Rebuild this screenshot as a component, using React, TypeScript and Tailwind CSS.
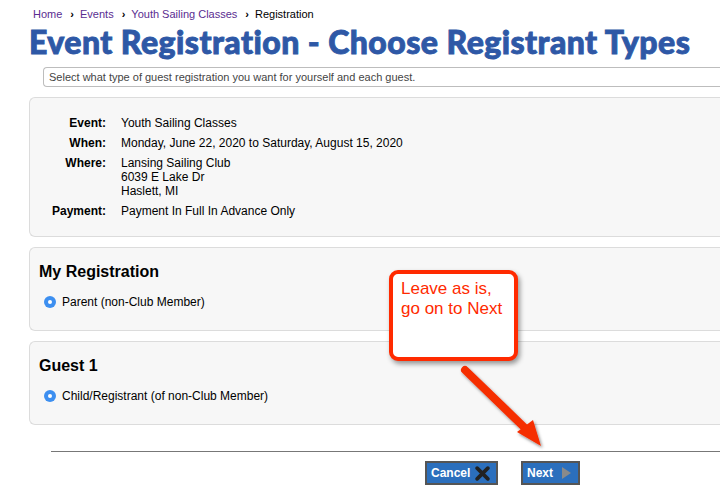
import React from 'react';

const details: [string, string[]][] = [
  ['Event:', ['Youth Sailing Classes']],
  ['When:', ['Monday, June 22, 2020 to Saturday, August 15, 2020']],
  ['Where:', ['Lansing Sailing Club', '6039 E Lake Dr', 'Haslett, MI']],
  ['Payment:', ['Payment In Full In Advance Only']],
];

function Radio() {
  return (
    <span className="flex h-[12px] w-[12px] shrink-0 items-center justify-center rounded-full bg-[#3d8ff0]">
      <span className="h-[4px] w-[4px] rounded-full bg-white" />
    </span>
  );
}

function GuestPanel({ title, option }: { title: string; option: string }) {
  return (
    <section className="mt-[10px] rounded-l-[6px] border border-r-0 border-[#dcdcdc] bg-[#f7f7f7] pb-[20px] pl-[9px] pt-[14px]">
      <h2 className="text-[16px] font-bold leading-[20px] text-black">{title}</h2>
      <label className="mt-[12px] flex items-center gap-[6px] pl-[5px] text-[12px] leading-[16px] text-black">
        <Radio />
        {option}
      </label>
    </section>
  );
}

function Chevron() {
  return <span className="ml-[8px] mr-[6px] text-[11px] font-bold text-black">›</span>;
}

export default function App() {
  return (
    <div className="relative h-[492px] w-[720px] overflow-hidden bg-white font-['Liberation_Sans',Arial,sans-serif]">
      <nav className="flex items-center pl-[33px] pt-[7px] text-[11px] leading-[14px]">
        <a className="text-[#5a2d91]">Home</a>
        <Chevron />
        <a className="text-[#5a2d91]">Events</a>
        <Chevron />
        <a className="text-[#5a2d91]">Youth Sailing Classes</a>
        <Chevron />
        <span className="text-black">Registration</span>
      </nav>

      <div className="pl-[29px]">
        <h1 className="mt-[2px] whitespace-nowrap font-['Lato',sans-serif] text-[32px] font-black leading-[38px] tracking-[0.45px] text-[#2e58a6] [-webkit-text-stroke:0.9px_#2e58a6]">
          Event Registration - Choose Registrant Types
        </h1>

        <div className="ml-[14px] mt-[6px] rounded-l-[4px] border border-r-0 border-[#bdbdbd] pl-[5px] text-[11px] leading-[18px] text-[#444]">
          Select what type of guest registration you want for yourself and each guest.
        </div>

        <section className="mt-[10px] rounded-l-[6px] border border-r-0 border-[#dcdcdc] bg-[#f7f7f7] pb-[15px] pt-[15px]">
          <div className="grid grid-cols-[76px_1fr] gap-x-[15px] text-[12px] leading-[14px] text-black">
            {details.map(([label, lines]) => (
              <React.Fragment key={label}>
                <div className="py-[3px] text-right font-bold">{label}</div>
                <div className="py-[3px]">
                  {lines.map((l) => (
                    <div key={l}>{l}</div>
                  ))}
                </div>
              </React.Fragment>
            ))}
          </div>
        </section>

        <GuestPanel title="My Registration" option="Parent (non-Club Member)" />
        <GuestPanel title="Guest 1" option="Child/Registrant (of non-Club Member)" />

        <div className="ml-[22px] mt-[26px] h-px bg-[#777]" />

        <div className="mt-[9px] flex gap-[23px] pl-[396px]">
          <button className="flex h-[24px] w-[73px] items-center gap-[5px] border-2 border-[#555] bg-[#2b6fbd] pl-[4px] text-[12px] font-bold text-white">
            Cancel
            <svg width="15" height="15" viewBox="0 0 14 14">
              <path d="M2 2 L12 12 M12 2 L2 12" stroke="#222" strokeWidth="3.4" strokeLinecap="round" />
            </svg>
          </button>
          <button className="flex h-[24px] w-[59px] items-center gap-[8px] border-2 border-[#555] bg-[#2b6fbd] pl-[4px] text-[12px] font-bold text-white">
            Next
            <svg width="11" height="14" viewBox="0 0 11 14">
              <path d="M1 1 L10 7 L1 13 Z" fill="#8a8a8a" />
            </svg>
          </button>
        </div>
      </div>

      {/* callout */}
      <div className="absolute left-[389px] top-[270px] h-[91px] w-[129px] rounded-[9px] border-[4px] border-[#ff2a00] bg-white pl-[8px] pt-[5px] text-[17px] leading-[20px] text-[#ff2a00] shadow-[2px_3px_5px_rgba(0,0,0,0.4)]">
        Leave as is,
        <br />
        go on to Next
      </div>

      <svg className="absolute left-[455px] top-[360px]" width="100" height="95" viewBox="0 0 100 95">
        <defs>
          <filter id="sh" x="-20%" y="-20%" width="140%" height="140%">
            <feDropShadow dx="1.5" dy="2" stdDeviation="1.5" floodColor="#000" floodOpacity="0.45" />
          </filter>
        </defs>
        <g filter="url(#sh)">
          <line x1="10" y1="10" x2="72" y2="70" stroke="#f52d00" strokeWidth="8" strokeLinecap="round" />
          <path d="M62 72 L86 86 L78 60 Z" fill="#f52d00" />
        </g>
      </svg>
    </div>
  );
}
